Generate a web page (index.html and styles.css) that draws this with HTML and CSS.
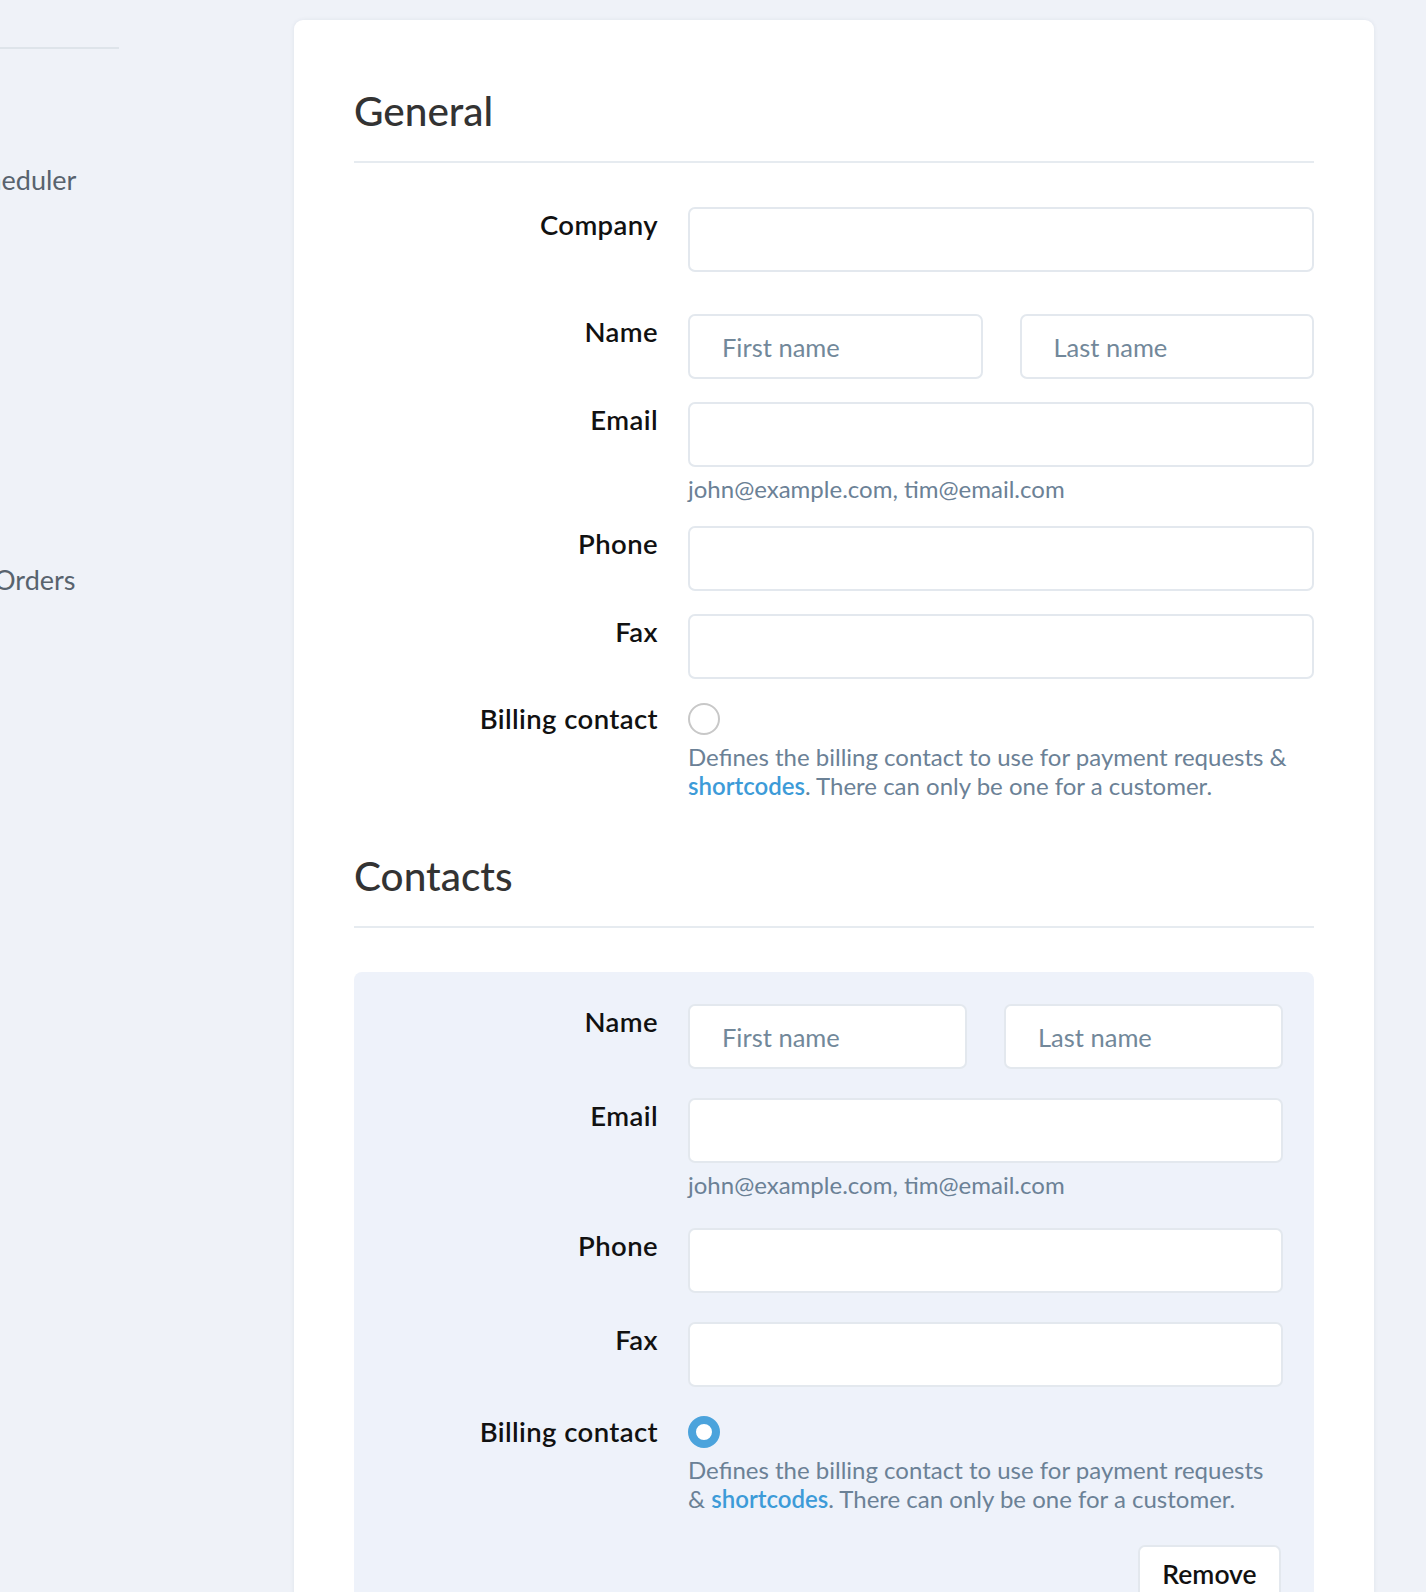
FILE: index.html
```html
<!DOCTYPE html>
<html lang="en">
<head>
    <meta charset="UTF-8">
    <meta name="viewport" content="width=device-width, initial-scale=1.0">
    <title>Customer</title>
    <link rel="stylesheet" href="styles.css">
</head>
<body>
    <div class="layout">
        <aside class="sidebar">
            <div class="sidebar-rule"></div>
            <nav class="sidebar-nav">
                <a class="nav-link nav-link--scheduler" href="#">Scheduler</a>
                <a class="nav-link nav-link--orders" href="#">Orders</a>
            </nav>
        </aside>

        <main class="card">
            <!-- General -->
            <section class="section">
                <h2 class="section-title">General</h2>
                <div class="form">
                    <div class="field field--spaced">
                        <label class="field-label">Company</label>
                        <div class="field-control"><input class="input" type="text"></div>
                    </div>
                    <div class="field">
                        <label class="field-label">Name</label>
                        <div class="field-control field-control--split">
                            <input class="input" type="text" placeholder="First name">
                            <input class="input" type="text" placeholder="Last name">
                        </div>
                    </div>
                    <div class="field">
                        <label class="field-label">Email</label>
                        <div class="field-control">
                            <input class="input" type="text">
                            <p class="hint">john@example.com, tim@email.com</p>
                        </div>
                    </div>
                    <div class="field">
                        <label class="field-label">Phone</label>
                        <div class="field-control"><input class="input" type="text"></div>
                    </div>
                    <div class="field">
                        <label class="field-label">Fax</label>
                        <div class="field-control"><input class="input" type="text"></div>
                    </div>
                    <div class="field field--check">
                        <label class="field-label">Billing contact</label>
                        <div class="field-control">
                            <input class="radio" type="radio" name="billing-general">
                            <p class="hint">Defines the billing contact to use for payment requests &amp; <a href="#">shortcodes</a>. There can only be one for a customer.</p>
                        </div>
                    </div>
                </div>
            </section>

            <!-- Contacts -->
            <section class="section section--contacts">
                <h2 class="section-title">Contacts</h2>
                <div class="contact-box">
                    <div class="form form--box">
                        <div class="field">
                            <label class="field-label">Name</label>
                            <div class="field-control field-control--split">
                                <input class="input" type="text" placeholder="First name">
                                <input class="input" type="text" placeholder="Last name">
                            </div>
                        </div>
                        <div class="field">
                            <label class="field-label">Email</label>
                            <div class="field-control">
                                <input class="input" type="text">
                                <p class="hint">john@example.com, tim@email.com</p>
                            </div>
                        </div>
                        <div class="field">
                            <label class="field-label">Phone</label>
                            <div class="field-control"><input class="input" type="text"></div>
                        </div>
                        <div class="field">
                            <label class="field-label">Fax</label>
                            <div class="field-control"><input class="input" type="text"></div>
                        </div>
                        <div class="field field--check">
                            <label class="field-label">Billing contact</label>
                            <div class="field-control">
                                <input class="radio" type="radio" name="billing-contact" checked>
                                <p class="hint">Defines the billing contact to use for payment requests &amp; <a href="#">shortcodes</a>. There can only be one for a customer.</p>
                                <div class="actions">
                                    <button class="btn" type="button">Remove</button>
                                </div>
                            </div>
                        </div>
                    </div>
                </div>
            </section>
        </main>
    </div>
</body>
</html>
```

FILE: styles.css
```css
* {
    margin: 0;
    padding: 0;
    box-sizing: border-box;
}

body {
    font-family: Lato, "Open Sans", Arial, sans-serif;
    background-color: #eff2f8;
    color: #111;
    overflow: hidden;
}

.layout {
    display: flex;
    align-items: flex-start;
}

/* Sidebar (scrolled partly out of view) */
.sidebar {
    width: 294px;
    flex: none;
}

.sidebar-rule {
    width: 119px;
    margin-top: 47px;
    border-top: 2px solid #dee4ea;
}

.sidebar-nav {
    display: flex;
    flex-direction: column;
}

.nav-link {
    font-size: 27px;
    line-height: 34px;
    color: #58636e;
    text-decoration: none;
    white-space: nowrap;
}

.nav-link--scheduler {
    margin-top: 114px;
    margin-left: -41px;
}

.nav-link--orders {
    margin-top: 366px;
    margin-left: -6px;
}

/* Card */
.card {
    width: 1080px;
    margin-top: 20px;
    padding: 61px 60px 60px;
    background-color: #fff;
    border-radius: 9px;
    box-shadow: 0 0 4px rgba(40, 60, 90, 0.08);
    min-height: 1600px;
}

.section--contacts {
    margin-top: 46px;
}

.section-title {
    font-size: 40.5px;
    font-weight: 500;
    line-height: 60px;
    color: #333;
    padding-bottom: 20px;
    border-bottom: 2px solid #e6ebf0;
}

.form {
    display: flex;
    flex-direction: column;
    gap: 23px;
    margin-top: 44px;
}

.form--box {
    gap: 29px;
    margin-top: 0;
}

.field {
    display: grid;
    grid-template-columns: 304px 1fr;
    column-gap: 30px;
}

.field--spaced {
    margin-bottom: 19px;
}

.field--check {
    margin-top: 1px;
}

.form--box .field--check {
    margin-top: 0;
}

.field-label {
    text-align: right;
    font-size: 27.5px;
    font-weight: 600;
    letter-spacing: 0.4px;
    line-height: 36px;
    color: #111;
}

.field--check .field-label {
    line-height: 32px;
}

.field-control--split {
    display: grid;
    grid-template-columns: 1fr 1fr;
    column-gap: 37px;
}

.input {
    display: block;
    width: 100%;
    height: 65px;
    padding: 0 32px;
    font-family: inherit;
    font-size: 25.5px;
    color: #333;
    background-color: #fff;
    border: 2px solid #e3e8ee;
    border-radius: 7px;
    outline: none;
}

.input::placeholder {
    color: #72889a;
}

.hint {
    margin-top: 7px;
    font-size: 24px;
    line-height: 29px;
    color: #6b8196;
}

.hint a {
    color: #3d9bd8;
    font-weight: 600;
    text-decoration: none;
}

.radio {
    appearance: none;
    display: block;
    width: 32px;
    height: 32px;
    margin: 0;
    border: 2px solid #c8c8c8;
    border-radius: 50%;
    background-color: #fff;
}

.radio:checked {
    border: 8px solid #4ba3dc;
}

/* Contact box */
.contact-box {
    margin-top: 44px;
    padding: 32px 31px 30px 0;
    background-color: #eef2fa;
    border-radius: 8px;
}

.actions {
    display: flex;
    justify-content: flex-end;
    margin-top: 32px;
}

.btn {
    width: 143px;
    height: 58px;
    margin-right: 2px;
    font-family: inherit;
    font-size: 26.5px;
    font-weight: 600;
    color: #111;
    background-color: #fff;
    border: 2px solid #e3e8ee;
    border-radius: 7px;
}
```
